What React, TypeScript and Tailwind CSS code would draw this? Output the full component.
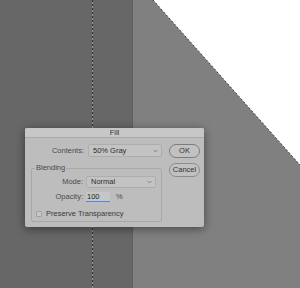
import React from 'react';

const font = { fontFamily: '"Liberation Sans", Arial, sans-serif' };

function Chevron() {
  return (
    <svg width="5" height="4" viewBox="0 0 5 4" className="text-[#777]">
      <path d="M0.5 1 L2.5 3 L4.5 1" fill="none" stroke="currentColor" strokeWidth="0.8" />
    </svg>
  );
}

function Select({ value, width }: { value: string; width: string }) {
  return (
    <div className={`${width} flex items-center justify-between rounded-[2px] border border-[#adadad] bg-[#c3c3c3] pl-[4px] pr-[3px] text-[#2e2e2e]`}>
      <span>{value}</span>
      <Chevron />
    </div>
  );
}

export default function App() {
  return (
    <div className="relative flex h-[288px] w-[300px] overflow-hidden antialiased" style={font}>
      <div className="w-[133px] border-r border-[#5f5f5f] bg-[#676767]" />
      <div className="flex-1 bg-[#808080]" />

      {/* canvas: selection triangle and marching ants */}
      <svg className="absolute inset-0" width="300" height="288" viewBox="0 0 300 288">
        <polygon points="153,0 300,0 300,165" fill="#ffffff" />
        <line x1="153" y1="0" x2="300" y2="165" stroke="#3a3a3a" strokeWidth="1" strokeDasharray="2 2" />
        <line x1="92.5" y1="0" x2="92.5" y2="288" stroke="#959595" strokeWidth="1" />
        <line x1="92.5" y1="0" x2="92.5" y2="288" stroke="#333333" strokeWidth="1" strokeDasharray="2 2" />
      </svg>

      {/* Fill dialog */}
      <div className="absolute left-[25px] top-[128px] flex h-[99px] w-[179px] flex-col overflow-hidden rounded-[2px] bg-[#bdbdbd] text-[7.5px] text-[#4a4a4a] shadow-[0_2px_10px_rgba(0,0,0,0.45)]">
        <div className="flex h-[10px] items-center justify-center border-b border-[#a9a9a9] bg-[#c7c7c7] text-[#333333]">
          Fill
        </div>
        <div className="flex flex-1 pt-[6px]">
          <div className="flex w-[140px] flex-col">
            <div className="flex h-[13px] items-center">
              <span className="w-[59px] text-right">Contents:</span>
              <div className="ml-[4px] flex h-full">
                <Select value="50% Gray" width="w-[74px]" />
              </div>
            </div>

            <div className="relative ml-[6px] mt-[11px] h-[54px] w-[131px] rounded-[2px] border border-[#a8a8a8]">
              <span className="absolute -top-[5px] left-[3px] bg-[#bdbdbd] px-[1px] leading-[8px]">Blending</span>
              <div className="mt-[7px] flex h-[12px] items-center">
                <span className="w-[51px] text-right">Mode:</span>
                <div className="ml-[3px] flex h-full">
                  <Select value="Normal" width="w-[70px]" />
                </div>
              </div>
              <div className="mt-[4px] flex h-[10px] items-center">
                <span className="w-[51px] text-right">Opacity:</span>
                <div className="ml-[3px] flex h-full w-[24px] items-center border-b border-[#4a8de0] bg-[#c6c6c6] pl-[1px] text-[#222]">
                  100
                </div>
                <span className="ml-[6px]">%</span>
              </div>
              <div className="mt-[6px] flex items-center pl-[4px]">
                <div className="h-[6px] w-[6px] rounded-[1px] border border-[#a0a0a0] bg-[#c8c8c8]" />
                <span className="ml-[4px] text-[#3a3a3a]">Preserve Transparency</span>
              </div>
            </div>
          </div>

          <div className="ml-[4px] flex flex-col gap-[5px]">
            <div className="flex h-[14px] w-[31px] items-center justify-center rounded-full border border-[#7d7d7d] bg-[#c1c1c1] text-[#333]">
              OK
            </div>
            <div className="flex h-[14px] w-[31px] items-center justify-center rounded-full border border-[#8d8d8d] bg-[#c1c1c1] text-[#333]">
              Cancel
            </div>
          </div>
        </div>
      </div>
    </div>
  );
}
